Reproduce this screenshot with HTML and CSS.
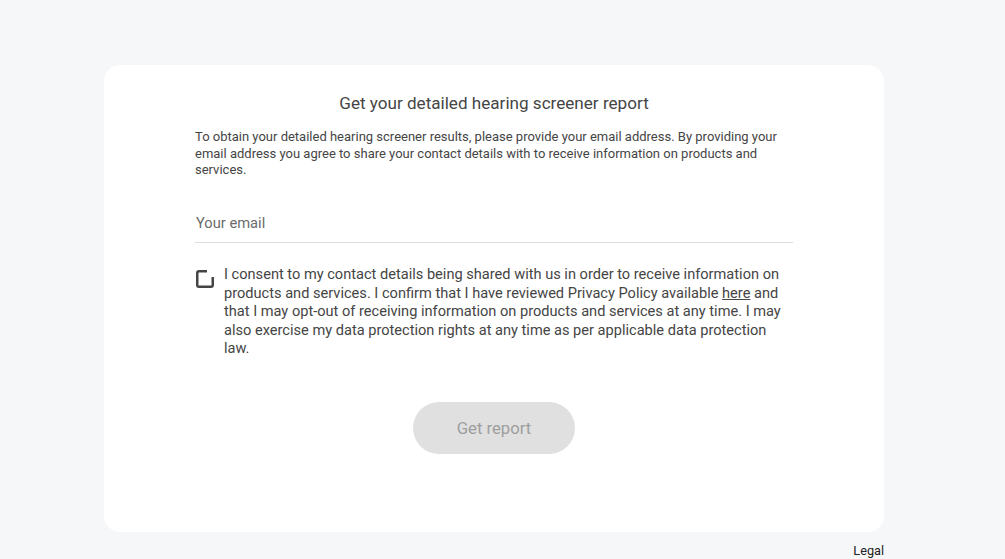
FILE: index.html
```html
<!DOCTYPE html>
<html lang="en">
<head>
<meta charset="utf-8">
<title>Get your detailed hearing screener report</title>
<link rel="stylesheet" href="styles.css">
</head>
<body>
<div class="page">
  <main class="card">
    <div class="content">
      <h1 class="title">Get your detailed hearing screener report</h1>
      <p class="intro">To obtain your detailed hearing screener results, please provide your email address. By providing your email address you agree to share your contact details with to receive information on products and services.</p>
      <div class="field">
        <input class="email" type="email" placeholder="Your email">
      </div>
      <label class="consent">
        <span class="box">
          <svg width="18" height="18" viewBox="0 0 18 18" aria-hidden="true">
            <path d="M11 1.25 H3 Q1.25 1.25 1.25 3 V15 Q1.25 16.75 3 16.75 H15 Q16.75 16.75 16.75 15 V7" fill="none" stroke="#454545" stroke-width="2.5"/>
          </svg>
        </span>
        <span class="consent-text">I consent to my contact details being shared with us in order to receive information on products and services. I confirm that I have reviewed Privacy Policy available <a href="#">here</a> and that I may opt-out of receiving information on products and services at any time. I may also exercise my data protection rights at any time as per applicable data protection law.</span>
      </label>
      <div class="actions">
        <button class="btn" type="button">Get report</button>
      </div>
    </div>
  </main>
  <footer class="footer"><a href="#">Legal</a></footer>
</div>
</body>
</html>
```
FILE: styles.css
```css
* { box-sizing: border-box; }
html, body { margin: 0; padding: 0; }
body {
  background: #f6f7f9;
  font-family: Roboto, "Liberation Sans", sans-serif;
  color: #444;
}
.page {
  width: 988px;
  display: flex;
  flex-direction: column;
  align-items: center;
  padding-top: 65px;
}
.card {
  width: 780px;
  height: 467px;
  background: #fff;
  border-radius: 16px;
  padding: 27px 91px 0;
}
.content { width: 598px; }
.title {
  margin: 0;
  text-align: center;
  font-size: 17.1px;
  font-weight: 400;
  line-height: 22px;
  color: #454545;
}
.intro {
  margin: 15px 0 0;
  font-size: 13px;
  line-height: 16.7px;
  color: #454545;
}
.field {
  margin-top: 29px;
  border-bottom: 1px solid #dedede;
}
.email {
  width: 100%;
  border: 0;
  outline: none;
  padding: 6px 1px 10px;
  font-family: inherit;
  font-size: 14.7px;
  color: #454545;
  background: transparent;
}
.email::placeholder { color: #6b6b6b; }
.consent {
  display: flex;
  gap: 10px;
  margin-top: 22px;
}
.box {
  flex: none;
  width: 18px;
  height: 18px;
  margin-top: 5px;
  margin-left: 1px;
  display: flex;
}
.consent-text {
  font-size: 14.6px;
  line-height: 18.6px;
  color: #454545;
}
.consent-text a { color: #454545; text-decoration: underline; }
.actions {
  display: flex;
  justify-content: center;
  margin-top: 44px;
}
.btn {
  width: 162px;
  height: 52px;
  border: 0;
  border-radius: 26px;
  background: #e0e0e0;
  color: #9e9e9e;
  font-family: inherit;
  font-size: 16.7px;
}
.footer {
  width: 780px;
  text-align: right;
  margin-top: 11px;
  font-size: 12.7px;
}
.footer a { color: #222; text-decoration: none; }
```
